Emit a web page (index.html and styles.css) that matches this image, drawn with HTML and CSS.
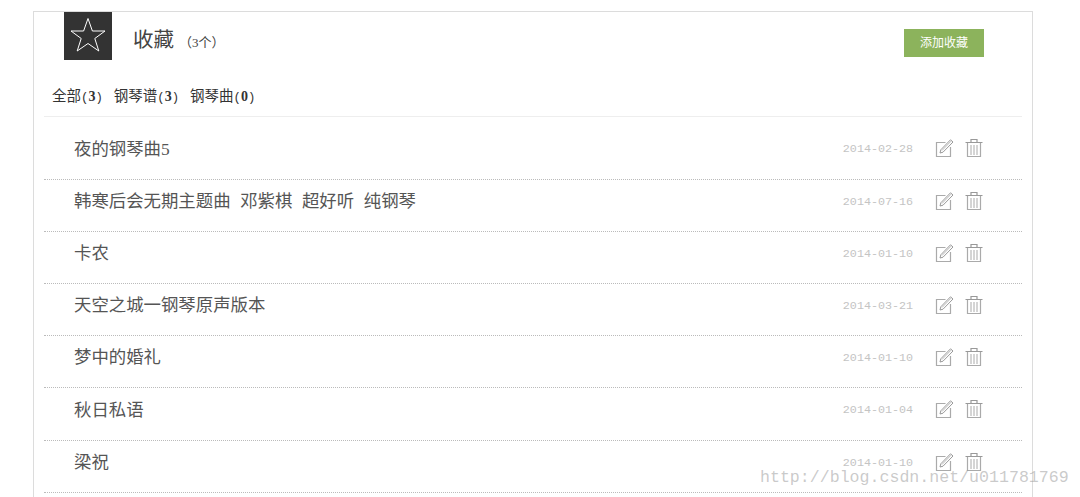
FILE: index.html
```html
<!DOCTYPE html>
<html lang="zh-CN">
<head>
    <meta charset="UTF-8">
    <meta name="viewport" content="width=device-width, initial-scale=1.0">
    <title>收藏</title>
    <link rel="stylesheet" href="styles.css">
</head>
<body>
    <svg class="defs" width="0" height="0">
        <symbol id="icon-edit" viewBox="0 0 20 20">
            <path d="M11.5 4.5H2.5V18.5H16.500V9" fill="none" stroke="#aaa" stroke-width="1.2"/>
            <path d="M6 15L6.800 11.800L16.500 1.800L19 4L9 14.200Z" fill="none" stroke="#999" stroke-width="1"/>
            <path d="M8 12.500L17 3.200" stroke="#bbb" stroke-width="1"/>
        </symbol>
        <symbol id="icon-trash" viewBox="0 0 20 20">
            <path d="M1.500 4.500H18.500M7 4V1.500H13V4" fill="none" stroke="#999" stroke-width="1.200"/>
            <path d="M3.500 5V18.500H16.500V5" fill="none" stroke="#aaa" stroke-width="1.200"/>
            <path d="M7 7V17M10 7V17M13 7V17" stroke="#aaa" stroke-width="1"/>
        </symbol>
    </svg>

    <div class="card">
        <div class="card-header">
            <div class="star-box">
                <svg width="38" height="38" viewBox="0 0 38 38">
                    <path d="M19 1.500L23.400 14H36L25.800 21.500L29.800 34L19 26.500L8.200 34L12.200 21.500L2 14H14.600Z" fill="none" stroke="#fff" stroke-width="1"/>
                </svg>
            </div>
            <h1 class="title">收藏</h1>
            <span class="count">（3个）</span>
            <button class="add-button">添加收藏</button>
        </div>

        <div class="tabs">
            <span>全部<span class="num">(<b>3</b>)</span></span>
            <span>钢琴谱<span class="num">(<b>3</b>)</span></span>
            <span>钢琴曲<span class="num">(<b>0</b>)</span></span>
        </div>

        <div class="list">
            <div class="row row-first">
                <span class="name">夜的钢琴曲5</span>
                <span class="date">2014-02-28</span>
                <svg class="icon"><use href="#icon-edit"/></svg>
                <svg class="icon"><use href="#icon-trash"/></svg>
            </div>
            <div class="row">
                <span class="name">韩寒后会无期主题曲 邓紫棋 超好听 纯钢琴</span>
                <span class="date">2014-07-16</span>
                <svg class="icon"><use href="#icon-edit"/></svg>
                <svg class="icon"><use href="#icon-trash"/></svg>
            </div>
            <div class="row">
                <span class="name">卡农</span>
                <span class="date">2014-01-10</span>
                <svg class="icon"><use href="#icon-edit"/></svg>
                <svg class="icon"><use href="#icon-trash"/></svg>
            </div>
            <div class="row">
                <span class="name">天空之城一钢琴原声版本</span>
                <span class="date">2014-03-21</span>
                <svg class="icon"><use href="#icon-edit"/></svg>
                <svg class="icon"><use href="#icon-trash"/></svg>
            </div>
            <div class="row">
                <span class="name">梦中的婚礼</span>
                <span class="date">2014-01-10</span>
                <svg class="icon"><use href="#icon-edit"/></svg>
                <svg class="icon"><use href="#icon-trash"/></svg>
            </div>
            <div class="row row-tall">
                <span class="name">秋日私语</span>
                <span class="date">2014-01-04</span>
                <svg class="icon"><use href="#icon-edit"/></svg>
                <svg class="icon"><use href="#icon-trash"/></svg>
            </div>
            <div class="row">
                <span class="name">梁祝</span>
                <span class="date">2014-01-10</span>
                <svg class="icon"><use href="#icon-edit"/></svg>
                <svg class="icon"><use href="#icon-trash"/></svg>
            </div>
        </div>
    </div>

    <div class="watermark">http://blog.csdn.net/u011781769</div>
</body>
</html>
```

FILE: styles.css
```css
html, body {
    height: 100%;
    overflow: hidden;
}
body {
    margin: 0;
    padding: 11px 0 0 33px;
    box-sizing: border-box;
    background-color: #fff;
    font-family: "Liberation Serif", "Noto Sans CJK SC", serif;
    color: #444;
}
.defs {
    position: absolute;
}
.card {
    width: 1000px;
    box-sizing: border-box;
    height: 600px;
    padding: 0 10px;
    border: 1px solid #dcdcdc;
}
/* header */
.card-header {
    display: flex;
    align-items: center;
    height: 48px;
    padding-left: 20px;
}
.star-box {
    width: 48px;
    height: 48px;
    background-color: #333;
    display: flex;
    align-items: center;
    justify-content: center;
}
.title {
    margin: 4px 0 0 21px;
    font-size: 20.5px;
    font-weight: normal;
    color: #444;
}
.count {
    margin-left: 5px;
    margin-top: 10px;
    font-size: 13px;
    color: #444;
}
.add-button {
    margin-left: auto;
    margin-right: 38px;
    margin-top: 13px;
    width: 80px;
    height: 28px;
    padding: 0 0 2px;
    border: none;
    background-color: #8cb35c;
    color: #fff;
    font-family: inherit;
    font-size: 12px;
}
/* tabs */
.tabs {
    display: flex;
    gap: 11px;
    height: 57px;
    padding: 12px 0 0 8px;
    align-items: center;
    box-sizing: border-box;
    border-bottom: 1px solid #eee;
    font-size: 14.5px;
    color: #333;
}
.num {
    font-family: "Liberation Mono", monospace;
    font-size: 12.300px;
}
.num b {
    font-family: "Liberation Serif", serif;
    font-size: 14px;
}
/* rows */
.row {
    display: flex;
    align-items: center;
    height: 52px;
    box-sizing: border-box;
    padding: 0 38px 8px 30px;
    border-bottom: 1px dotted #bbb;
}
.row-first {
    height: 63px;
    padding-top: 2px;
    padding-bottom: 0;
}
.row-tall {
    height: 53px;
}
.name {
    flex: 1;
    font-size: 17.4px;
    word-spacing: 5.3px;
    color: #555;
    margin-bottom: 4px;
}
.date {
    font-family: "Liberation Mono", monospace;
    font-size: 11.7px;
    color: #c4c4c4;
    margin-right: 21px;
}
.icon {
    width: 20px;
    height: 20px;
    margin-left: 10px;
    margin-bottom: 2px;
}
.date + .icon {
    margin-left: 0;
}
.watermark {
    position: absolute;
    left: 760px;
    top: 468px;
    font-family: "Liberation Mono", monospace;
    font-size: 16.6px;
    color: rgba(150, 150, 150, 0.5);
}
```
